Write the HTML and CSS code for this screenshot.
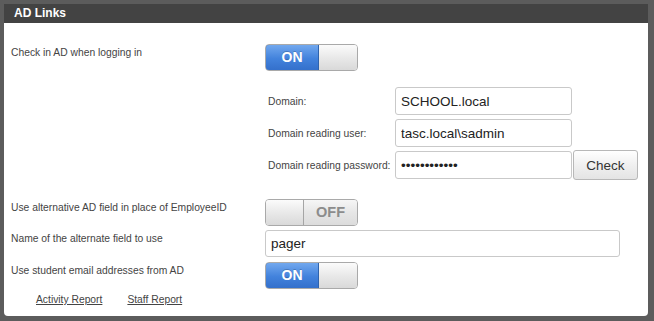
FILE: index.html
```html
<!DOCTYPE html>
<html lang="en">
<head>
  <meta charset="UTF-8" />
  <title>AD Links</title>
  <link rel="stylesheet" href="styles.css">
</head>
<body>

  <div class="window">
    <div class="titlebar">AD Links</div>

    <div class="panel">
      <div class="row">
        <span class="label">Check in AD when logging in</span>
        <div class="switch">
          <span class="switch-on">ON</span>
          <span class="switch-knob"></span>
        </div>
      </div>

      <div class="domain">
        <div class="field">
          <label for="domain">Domain:</label>
          <input type="text" id="domain" value="SCHOOL.local" />
        </div>
        <div class="field">
          <label for="domainUser">Domain reading user:</label>
          <input type="text" id="domainUser" value="tasc.local\sadmin" />
        </div>
        <div class="field">
          <label for="domainPass">Domain reading password:</label>
          <input type="password" id="domainPass" value="xxxxxxxxxxxx" />
          <button class="check-button">Check</button>
        </div>
      </div>

      <div class="row row-alt">
        <span class="label">Use alternative AD field in place of EmployeeID</span>
        <div class="switch">
          <span class="switch-knob"></span>
          <span class="switch-off">OFF</span>
        </div>
      </div>

      <div class="row row-field">
        <span class="label">Name of the alternate field to use</span>
        <input type="text" class="wide-input" value="pager" />
      </div>

      <div class="row row-email">
        <span class="label">Use student email addresses from AD</span>
        <div class="switch">
          <span class="switch-on">ON</span>
          <span class="switch-knob"></span>
        </div>
      </div>

      <div class="links">
        <a href="#">Activity Report</a>
        <a href="#">Staff Report</a>
      </div>
    </div>
  </div>

</body>
</html>
```

FILE: styles.css
```css
:root {
  --frame-grey: #5c5c5c;
  --title-dark: #434343;
  --text-dark: #444;
  --input-border: #c9c9c9;
}

body {
  margin: 0;
  background: var(--frame-grey);
  font-family: 'Liberation Sans', Arial, sans-serif;
  color: var(--text-dark);
}

.window {
  width: 644px;
  padding: 4px 6px 5px 4px;
}

.titlebar {
  height: 19px;
  line-height: 19px;
  background: var(--title-dark);
  color: #fff;
  font-size: 12px;
  font-weight: bold;
  padding-left: 10px;
}

.panel {
  height: 272px;
  background: #fff;
  border-radius: 0 0 4px 4px;
  padding: 21px 0 0 7px;
  display: flex;
  flex-direction: column;
}

.row {
  display: grid;
  grid-template-columns: 254px 1fr;
  align-items: start;
}

.label {
  font-size: 10.3px;
  line-height: 14px;
  padding-top: 2px;
}

/* toggle switches */
.switch {
  display: flex;
  width: 93px;
  height: 27px;
  border-radius: 4px;
  overflow: hidden;
  box-sizing: border-box;
  border: 1px solid #a9a9a9;
}

.switch-on {
  width: 52px;
  background: linear-gradient(#72a8ee, #4282dc 55%, #3470cb);
  color: #fff;
  font-size: 14px;
  font-weight: bold;
  line-height: 25px;
  text-align: center;
  text-shadow: 0 -1px 0 rgba(0,0,0,0.2);
  margin: -1px 0 -1px -1px;
  border: 1px solid #2f63ad;
  border-radius: 4px 0 0 4px;
}

.switch-knob {
  flex: 1;
  background: linear-gradient(#fbfbfb, #e9e9e9 50%, #d9d9d9);
}

.switch-off {
  width: 53px;
  border-left: 1px solid #a5a5a5;
  background: linear-gradient(#f6f6f6, #e6e6e6 50%, #dcdcdc);
  color: #8c8c8c;
  font-size: 14.5px;
  font-weight: bold;
  line-height: 25px;
  text-align: center;
}

/* domain block */
.domain {
  margin: 16px 0 0 257px;
  display: flex;
  flex-direction: column;
  gap: 4px;
}

.field {
  display: flex;
  align-items: center;
  height: 28px;
}

.field label {
  width: 127px;
  font-size: 10.3px;
}

input {
  box-sizing: border-box;
  height: 28px;
  border: 1px solid var(--input-border);
  border-radius: 3px;
  padding: 0 5px;
  font-family: 'Liberation Sans', Arial, sans-serif;
  font-size: 13.5px;
  color: #222;
}

.field input {
  width: 177px;
}

.check-button {
  box-sizing: border-box;
  width: 65px;
  height: 30px;
  margin: -1px 0 -1px 1px;
  border: 1px solid #b8b8b8;
  border-radius: 3px;
  background: linear-gradient(#ffffff, #f0f0f0 50%, #e4e4e4);
  font-family: 'Liberation Sans', Arial, sans-serif;
  font-size: 13.5px;
  color: #333;
}

.row-alt {
  margin-top: 20px;
}

.row-field {
  margin-top: 4px;
}

.wide-input {
  width: 355px;
  height: 27px;
}

.row-email {
  margin-top: 5px;
}

/* footer links */
.links {
  margin: 4px 0 0 25px;
  display: flex;
  gap: 25px;
  font-size: 10.3px;
  line-height: 14px;
}

.links a {
  color: var(--text-dark);
}
```
